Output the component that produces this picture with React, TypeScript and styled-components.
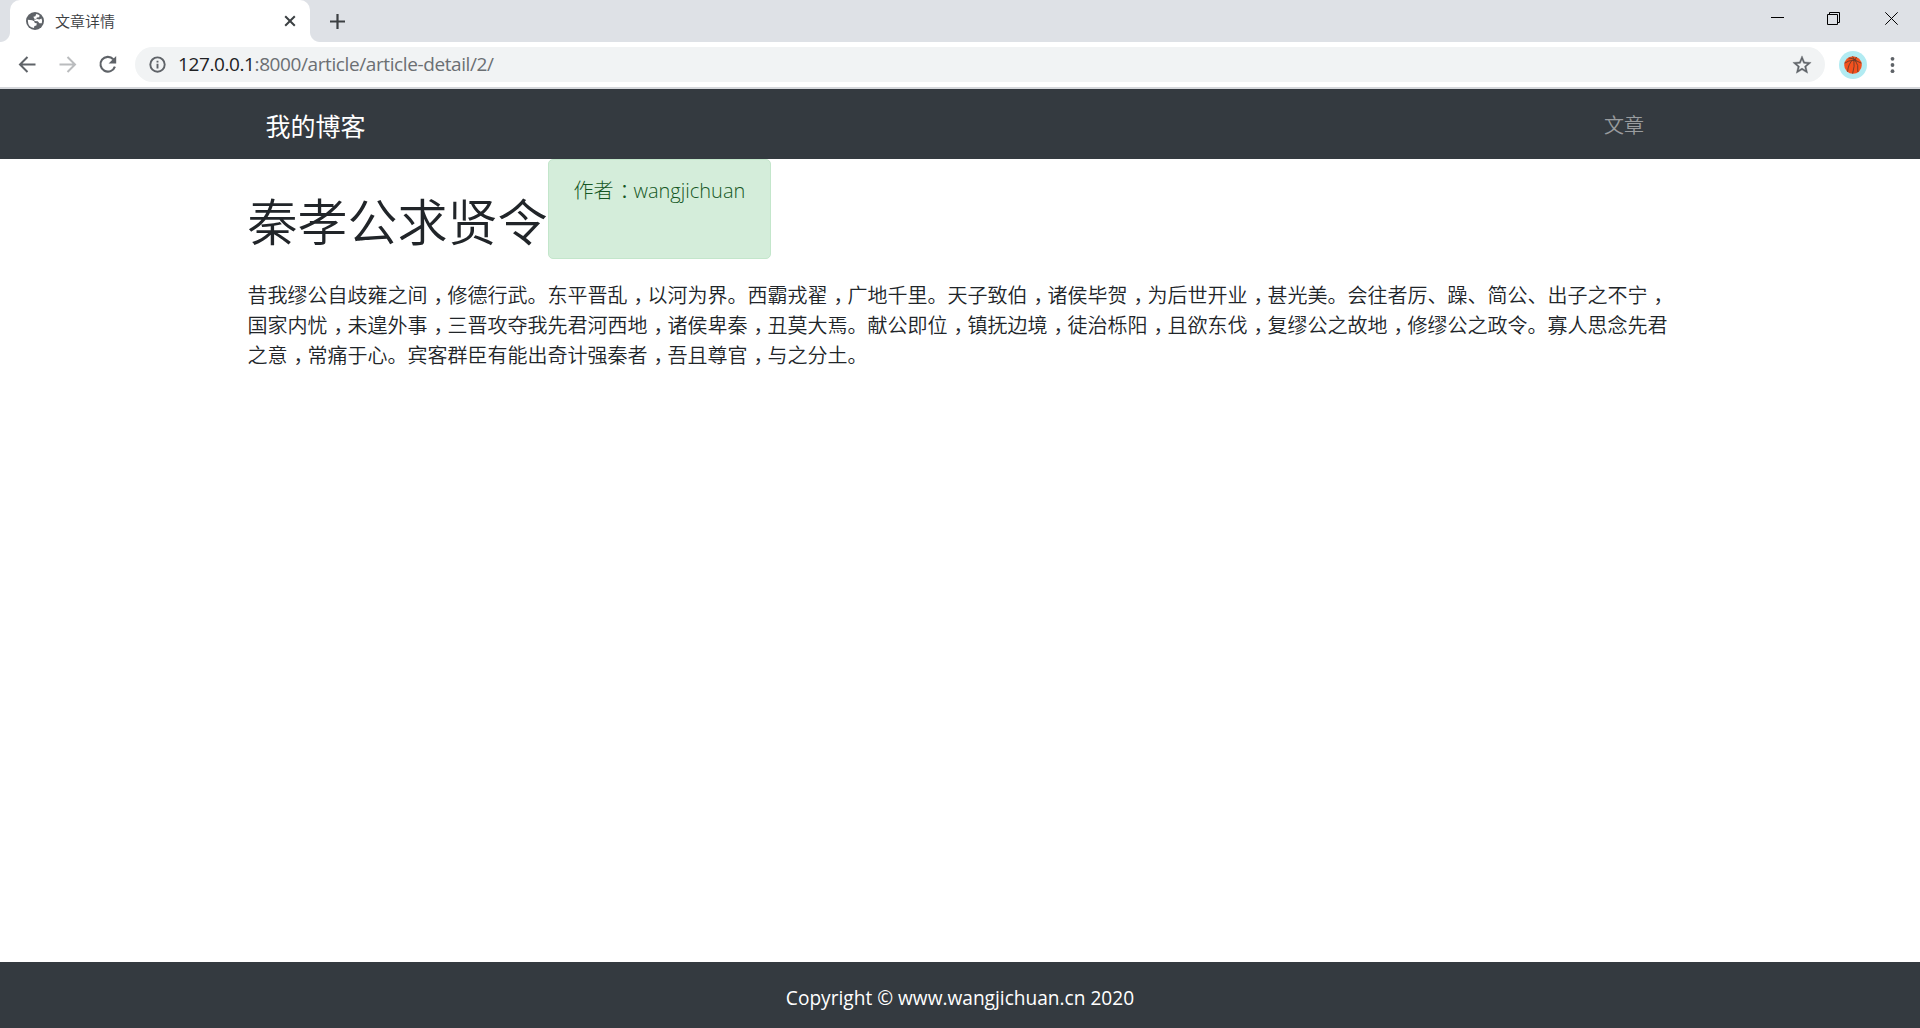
import React from "react";
import styled, { createGlobalStyle } from "styled-components";

const Global = createGlobalStyle`
  *, *::before, *::after { box-sizing: border-box; }
  body {
    margin: 0;
    background: #fff;
    color: #212529;
    font-family: "Open Sans", "Noto Sans CJK SC", sans-serif;
    font-size: 20px;
    line-height: 30px;
  }
`;

const Window = styled.div`
  height: 1028px;
  display: flex;
  flex-direction: column;
  overflow: hidden;
`;
const TabStrip = styled.header`
  height: 42px;
  flex: none;
  display: flex;
  justify-content: space-between;
  background: #dee1e6;
`;
const TabGroup = styled.div`
  display: flex;
`;
const TabEdge = styled.i<{ $side: "left" | "right" }>`
  width: 10px;
  height: 42px;
  background: radial-gradient(circle at ${(p) => (p.$side === "left" ? "0 0" : "100% 0")}, #dee1e6 9.5px, #fff 10.5px) 0 32px / 10px 10px no-repeat;
`;
const Tab = styled.div`
  width: 300px;
  height: 42px;
  display: flex;
  align-items: center;
  padding: 0 14px 0 16px;
  border-radius: 10px 10px 0 0;
  background: #fff;
`;
const TabTitle = styled.span`
  flex: 1;
  margin-left: 11px;
  font-size: 15px;
  line-height: 42px;
  font-weight: 350;
  color: #3c4043;
`;
const NewTab = styled.div`
  display: flex;
  align-items: center;
  padding-left: 10px;
`;
const WindowButtons = styled.div`
  display: flex;
  height: 37px;
`;
const WindowButton = styled.div`
  width: 57px;
  display: flex;
  align-items: center;
  justify-content: center;
`;
const Toolbar = styled.div`
  height: 47px;
  flex: none;
  display: flex;
  align-items: center;
  padding: 0 15px 0 15px;
  border-bottom: 2px solid #d5d7db;
`;
const NavButtons = styled.div`
  display: flex;
  gap: 16px;
  width: 120px;
`;
const AddressBar = styled.div`
  width: 1690px;
  height: 35px;
  display: flex;
  align-items: center;
  padding: 0 12px 0 12px;
  border-radius: 18px;
  background: #f1f3f4;
`;
const Url = styled.span`
  flex: 1;
  margin-left: 11px;
  font-size: 19px;
  line-height: 35px;
  height: 35px;
  letter-spacing: -0.4px;
  color: #6b6f73;
`;
const Host = styled.span`
  color: #202124;
`;
const Avatar = styled.div`
  display: flex;
  margin: 0 15px 0 14px;
`;

const Navbar = styled.nav`
  height: 70px;
  flex: none;
  background: #343a40;
`;
const NavInner = styled.div`
  width: 1425px;
  height: 70px;
  margin: 0 auto;
  padding: 0 28.5px 0 18px;
  display: flex;
  justify-content: space-between;
`;
const Brand = styled.span`
  font-size: 25px;
  line-height: 74px;
  color: #fff;
`;
const NavLink = styled.span`
  line-height: 74px;
  font-weight: 350;
  color: rgba(255, 255, 255, 0.5);
`;

const Main = styled.main`
  flex: 1;
  width: 1425px;
  margin: 0 auto;
`;
const TitleRow = styled.div`
  display: flex;
  height: 122px;
`;
const Title = styled.h1`
  width: 300px;
  margin: 0;
  padding-top: 33px;
  font-size: 50px;
  line-height: 60px;
  font-weight: 350;
  white-space: nowrap;
`;
const Author = styled.div`
  width: 223.5px;
  height: 100px;
  padding: 16px 25px;
  border: 1px solid #c3e6cb;
  border-radius: 5px;
  background: #d4edda;
  color: #155724;
  white-space: nowrap;
  font-weight: 300;
`;
const Body = styled.p`
  margin: 0;
  font-weight: 350;
`;
const Line = styled.span`
  display: block;
  white-space: nowrap;
`;
const Mark = styled.span`
  margin: 0 0.2em 0 0.3em;
  font-feature-settings: "halt";
`;
const Footer = styled.footer`
  height: 66px;
  flex: none;
  background: #343a40;
  color: #fff;
  text-align: center;
  line-height: 72px;
  font-size: 19.13px;
`;

const article = [
  "昔我缪公自歧雍之间，修德行武。东平晋乱，以河为界。西霸戎翟，广地千里。天子致伯，诸侯毕贺，为后世开业，甚光美。会往者厉、躁、简公、出子之不宁，",
  "国家内忧，未遑外事，三晋攻夺我先君河西地，诸侯卑秦，丑莫大焉。献公即位，镇抚边境，徒治栎阳，且欲东伐，复缪公之故地，修缪公之政令。寡人思念先君",
  "之意，常痛于心。宾客群臣有能出奇计强秦者，吾且尊官，与之分土。",
];

const Centred = ({ text }: { text: string }) => (
  <>
    {text.split(/([，：])/).map((part, i) =>
      i % 2 ? <Mark key={i}>{part}</Mark> : part
    )}
  </>
);

const Globe = () => (
  <svg width="18" height="18" viewBox="0 0 18 18">
    <circle cx="9" cy="9" r="9" fill="#5f6368" />
    <path d="M1.9 7.8 6.2 8.2Q8.8 8.6 8.8 11L10.8 11.2 10.4 13.6 8.4 14 8 16.1Q2 15.2 1.9 9ZM10.2 2Q12.4 2.2 13.6 3.4L13.2 5.2 10.8 5.6 10.2 7.4 8.2 7.6 8.6 9 11.8 9.2 13.4 11.2 15.8 11.2 16.1 8.6 15.5 6.4 13.4 7.4 11 7 8.2 6.8 7.4 4.8 9.4 4.2Z" fill="#fff" />
  </svg>
);
const Arrow = ({ flip, color }: { flip?: boolean; color: string }) => (
  <svg width="24" height="24" viewBox="0 0 24 24">
    <path transform={flip ? "translate(24.5 0) scale(-1 1)" : "translate(.5 0)"} d="M20 11.5H5M12 4 4.5 11.5 12 19" fill="none" stroke={color} strokeWidth="2" />
  </svg>
);
const Reload = () => (
  <svg width="24" height="24" viewBox="0 0 24 24">
    <path d="M18.3 6.2A7.4 7.4 0 1 0 19.9 13.6" fill="none" stroke="#5f6368" strokeWidth="2.1" />
    <path d="M21.2 3V10.5H13.6z" fill="#5f6368" />
  </svg>
);
const Info = () => (
  <svg width="20" height="20" viewBox="0 0 20 20">
    <circle cx="10.5" cy="9.6" r="7.2" fill="none" stroke="#5f6368" strokeWidth="1.9" />
    <path d="M10.5 8.8v4.8M10.5 5.7v1.9" stroke="#5f6368" strokeWidth="1.9" />
  </svg>
);
const Star = () => (
  <svg width="22" height="22" viewBox="0 0 24 24">
    <path d="M22 9.24l-7.19-.62L12 2 9.19 8.63 2 9.24l5.46 4.73L5.82 21 12 17.27 18.18 21l-1.63-7.03L22 9.24zM12 15.4l-3.76 2.27 1-4.28-3.32-2.88 4.38-.38L12 6.1l1.71 4.04 4.38.38-3.32 2.88 1 4.28L12 15.4z" fill="#5f6368" stroke="#5f6368" strokeWidth=".4" />
  </svg>
);
const Basketball = () => (
  <svg width="28" height="28" viewBox="0 0 28 28">
    <circle cx="14" cy="14" r="14" fill="#b2ebf2" />
    <circle cx="14" cy="14" r="8.8" fill="#f4511e" />
    <path d="M5.6 12.2Q13.5 6.6 22.4 12.2M14.2 8.4Q9 13 8.6 20.8M14.8 8.4Q16 15 13.6 22.6M16 8.8Q20 14 18.8 21.2M9.5 7Q14 7 17.5 9.5M13.5 5.4 15.5 8.6M17.5 6 16 9" fill="none" stroke="#5a3a2a" strokeWidth=".8" />
  </svg>
);

export default function App() {
  return (
    <Window>
      <Global />
      <TabStrip>
        <TabGroup>
          <TabEdge $side="left" />
          <Tab>
            <Globe />
            <TabTitle>文章详情</TabTitle>
            <svg width="12" height="12" viewBox="0 0 12 12">
              <path d="M1.2 1.2l9.6 9.6M10.8 1.2 1.2 10.8" stroke="#3c4043" strokeWidth="2" />
            </svg>
          </Tab>
          <TabEdge $side="right" />
          <NewTab>
            <svg width="15" height="15" viewBox="0 0 15 15">
              <path d="M7.5 0v15M0 7.5h15" stroke="#3c4043" strokeWidth="2.2" />
            </svg>
          </NewTab>
        </TabGroup>
        <WindowButtons>
          <WindowButton>
            <svg width="13" height="13" viewBox="0 0 13 13"><path d="M0 5.5h13" stroke="#000" /></svg>
          </WindowButton>
          <WindowButton>
            <svg width="15" height="13" viewBox="0 0 15 13">
              <path d="M.5 2.5h10v10H.5zM2.5 2.5v-2h10v10h-2" fill="none" stroke="#000" />
            </svg>
          </WindowButton>
          <WindowButton>
            <svg width="13" height="13" viewBox="0 0 13 13"><path d="M.3.3l12.4 12.4M12.7.3.3 12.7" stroke="#000" /></svg>
          </WindowButton>
        </WindowButtons>
      </TabStrip>
      <Toolbar>
        <NavButtons>
          <Arrow color="#5f6368" />
          <Arrow flip color="#babcbe" />
          <Reload />
        </NavButtons>
        <AddressBar>
          <Info />
          <Url><Host>127.0.0.1</Host>:8000/article/article-detail/2/</Url>
          <Star />
        </AddressBar>
        <Avatar><Basketball /></Avatar>
        <svg width="20" height="20" viewBox="0 0 20 20" fill="#5f6368">
          <circle cx="10.5" cy="3.8" r="1.9" /><circle cx="10.5" cy="10" r="1.9" /><circle cx="10.5" cy="16.2" r="1.9" />
        </svg>
      </Toolbar>
      <Navbar>
        <NavInner>
          <Brand>我的博客</Brand>
          <NavLink>文章</NavLink>
        </NavInner>
      </Navbar>
      <Main>
        <TitleRow>
          <Title>秦孝公求贤令</Title>
          <Author><Centred text="作者：wangjichuan" /></Author>
        </TitleRow>
        <Body>
          {article.map((line) => (
            <Line key={line}><Centred text={line} /></Line>
          ))}
        </Body>
      </Main>
      <Footer>Copyright © www.wangjichuan.cn 2020</Footer>
    </Window>
  );
}
